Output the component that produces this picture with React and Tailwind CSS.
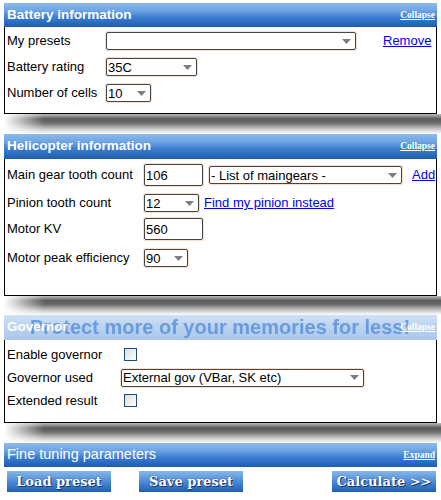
import React from "react";

const HDR =
  "bg-[linear-gradient(to_bottom,#8bbaec_0%,#6fa6e4_30%,#3a7bd0_62%,#1c5db3_100%)]";
const SHADOW =
  "bg-[linear-gradient(to_right,#ffffff_0px,rgba(255,255,255,0)_40px),linear-gradient(to_bottom,#bdbdbd_0%,#5a5a5a_25%,#6e6e6e_45%,#c8c8c8_75%,#ffffff_100%)]";

function Arrow() {
  return (
    <svg width="9" height="5" viewBox="0 0 9 5" className="shrink-0">
      <polygon points="0,0 9,0 4.5,5" fill="#7d7d7d" />
    </svg>
  );
}

function Select({ w, value, h = "h-[18px]" }) {
  return (
    <div
      className={`${w} ${h} flex items-center justify-between border border-[#4a4440] rounded-[2px] shadow-[0_0_0_1px_#f7dfcf] bg-white pl-[1px] pr-[4px] text-[13px] leading-none text-black`}
    >
      <span className="whitespace-nowrap">{value}</span>
      <Arrow />
    </div>
  );
}

function Input({ value }) {
  return (
    <div className="w-[59px] h-[22px] flex items-center border border-[#4a4440] rounded-[2px] shadow-[0_0_0_1px_#f7dfcf] bg-white pl-[1px] text-[13px] leading-none text-black">
      {value}
    </div>
  );
}

function Check() {
  return (
    <div className="ml-[3px] w-[13px] h-[13px] border border-[#1e4d7c] bg-[linear-gradient(135deg,#dcdcdc,#ffffff)]" />
  );
}

function Header({ title, link, h, bold = true }) {
  return (
    <div className={`${h} ${HDR} flex items-center justify-between pl-[3px] pr-[2px]`}>
      <span
        className={`text-white whitespace-nowrap ${
          bold ? "font-bold text-[13.5px]" : "text-[14.5px]"
        }`}
      >
        {title}
      </span>
      <span className="text-white underline text-[9.5px] font-['Liberation_Serif',serif] font-bold">
        {link}
      </span>
    </div>
  );
}

function Shadow({ h }) {
  return <div className={`${h} ${SHADOW} -mr-[4px]`} />;
}

function Label({ w, children }) {
  return <div className={`${w} shrink-0 whitespace-nowrap text-[13px] text-black`}>{children}</div>;
}

function Btn({ children }) {
  return (
    <div className="w-[104px] h-[21px] flex items-center justify-center bg-[linear-gradient(to_bottom,#86b7ea_0%,#4d8bd8_50%,#1d5fb5_100%)] text-white font-['DejaVu_Serif',serif] font-black text-[13px] [text-shadow:0_0_1px_#17376b,1px_1px_0_#17376b]">
      {children}
    </div>
  );
}

export default function App() {
  return (
    <div className="w-[441px] h-[500px] overflow-hidden bg-white font-['Liberation_Sans',Arial,sans-serif] relative">
      <div className="ml-[4px] w-[433px] pt-[3px]">
        {/* Battery information */}
        <Header title="Battery information" link="Collapse" h="h-[24px]" />
        <div className="h-[87px] border border-t-0 border-black pl-[2px] pt-[5px] flex flex-col gap-[8px]">
          <div className="flex items-center h-[18px]">
            <Label w="w-[99px]">My presets</Label>
            <Select w="w-[250px]" value="" />
            <a className="ml-[27px] text-[13px] text-[#0000ee] underline">Remove</a>
          </div>
          <div className="flex items-center h-[18px]">
            <Label w="w-[99px]">Battery rating</Label>
            <Select w="w-[91px]" value="35C" />
          </div>
          <div className="flex items-center h-[18px]">
            <Label w="w-[99px]">Number of cells</Label>
            <Select w="w-[45px]" value="10" />
          </div>
        </div>
        <Shadow h="h-[20px]" />

        {/* Helicopter information */}
        <Header title="Helicopter information" link="Collapse" h="h-[25px]" />
        <div className="h-[137px] border border-t-0 border-black pl-[2px] pt-[5px] flex flex-col">
          <div className="flex items-center h-[22px]">
            <Label w="w-[137px]">Main gear tooth count</Label>
            <Input value="106" />
            <div className="ml-[6px]">
              <Select w="w-[193px]" value="- List of maingears -" />
            </div>
            <a className="ml-[10px] text-[13px] text-[#0000ee] underline">Add</a>
          </div>
          <div className="flex items-center h-[18px] mt-[8px]">
            <Label w="w-[137px]">Pinion tooth count</Label>
            <Select w="w-[55px]" value="12" />
            <a className="ml-[5px] text-[13px] text-[#0000ee] underline whitespace-nowrap">
              Find my pinion instead
            </a>
          </div>
          <div className="flex items-center h-[22px] mt-[6px]">
            <Label w="w-[137px]">Motor KV</Label>
            <Input value="560" />
          </div>
          <div className="flex items-center h-[18px] mt-[9px]">
            <Label w="w-[137px]">Motor peak efficiency</Label>
            <Select w="w-[44px]" value="90" />
          </div>
        </div>
        <Shadow h="h-[19px]" />

        {/* Governor */}
        <div className="relative h-[25px] bg-[linear-gradient(to_bottom,#cfe0f4_0%,#b9d2f0_50%,#a9c7ec_100%)] flex items-center justify-between pl-[3px] pr-[2px]">
          <span className="absolute left-[26px] top-[-1px] text-[20px] leading-[26px] font-bold text-[#4f89d8] opacity-75 blur-[0.4px] whitespace-nowrap">
            Protect more of your memories for less!
          </span>
          <span className="relative text-white font-bold text-[13.5px]">Governor</span>
          <span className="relative text-white underline text-[9.5px] font-['Liberation_Serif',serif] font-bold">
            Collapse
          </span>
        </div>
        <div className="h-[83px] border border-t-0 border-black pl-[2px] pt-[3px] flex flex-col">
          <div className="flex items-center h-[23px]">
            <Label w="w-[114px]">Enable governor</Label>
            <Check />
          </div>
          <div className="flex items-center h-[23px]">
            <Label w="w-[114px]">Governor used</Label>
            <Select w="w-[243px]" value="External gov (VBar, SK etc)" />
          </div>
          <div className="flex items-center h-[23px]">
            <Label w="w-[114px]">Extended result</Label>
            <Check />
          </div>
        </div>
        <Shadow h="h-[20px]" />

        {/* Fine tuning */}
        <Header title="Fine tuning parameters" link="Expand" h="h-[24px]" bold={false} />
        <div className="mt-[4px] flex items-center pl-[3px] pr-[1px]">
          <Btn>Load preset</Btn>
          <div className="ml-[28px]">
            <Btn>Save preset</Btn>
          </div>
          <div className="ml-auto">
            <Btn>Calculate &gt;&gt;</Btn>
          </div>
        </div>
      </div>
    </div>
  );
}
